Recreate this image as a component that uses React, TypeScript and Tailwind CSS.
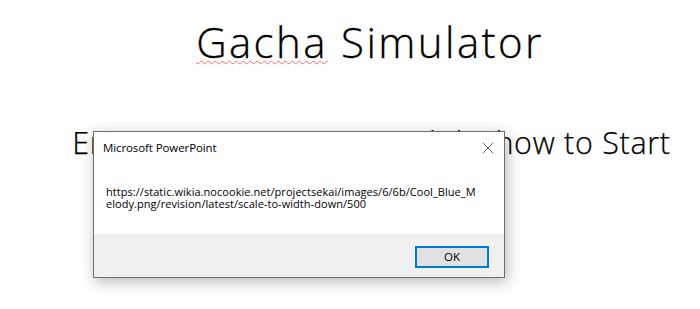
import { X } from 'lucide-react';

const UI_FONT = "font-['Open_Sans',sans-serif]";

function MessageBox() {
  return (
    <div className={`absolute left-[93px] top-[131px] w-[412px] h-[147px] border border-[#6e6e6e] bg-[#f0f0f0] shadow-[2px_4px_14px_rgba(0,0,0,0.28)] flex flex-col ${UI_FONT} text-black`}>
      <div className="bg-white h-[32px] flex items-center justify-between pl-[9px] pr-[6px]">
        <span className="text-[11.5px] tracking-[-0.1px]">Microsoft PowerPoint</span>
        <X className="w-[20px] h-[20px] text-[#222]" strokeWidth={0.9} />
      </div>
      <div className="bg-white h-[70px] pl-[12px] pt-[22px] text-[11px] leading-[12px] tracking-[0.05px] whitespace-nowrap">
        <div>https://static.wikia.nocookie.net/projectsekai/images/6/6b/Cool_Blue_M</div>
        <div>elody.png/revision/latest/scale-to-width-down/500</div>
      </div>
      <div className="flex-1 flex justify-end items-start pt-[12px] pr-[15px]">
        <button className="w-[74px] h-[22px] border-2 border-[#0078d7] bg-[#e1e1e1] text-[11.5px] leading-none">OK</button>
      </div>
    </div>
  );
}

export default function App() {
  return (
    <div className="relative w-[700px] h-[309px] bg-white overflow-hidden font-['Open_Sans',sans-serif] text-black">
      <div className="pl-[40px] flex flex-col items-center">
        <h1 className="mt-[13px] text-[42px] font-light leading-[58px] tracking-[2.4px] [-webkit-text-stroke:0.3px_black]">
          <span className="underline decoration-wavy decoration-[#ff6b6b] decoration-[1px] underline-offset-[2px]">Gacha</span> Simulator
        </h1>
        <p className="mt-[51px] ml-[3px] text-[30.5px] font-light leading-[40px] tracking-[0.7px] whitespace-nowrap [-webkit-text-stroke:0.25px_black]">
          Enter Presentation <span className="mx-[11px]">or</span> Slideshow to Start
        </p>
      </div>
      <MessageBox />
    </div>
  );
}
